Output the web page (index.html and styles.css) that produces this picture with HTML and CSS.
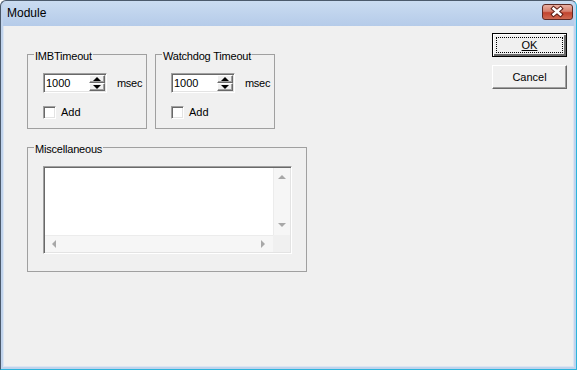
FILE: index.html
```html
<!DOCTYPE html>
<html lang="en">
<head>
  <meta charset="UTF-8" />
  <meta name="viewport" content="width=device-width, initial-scale=1.0" />
  <title>Module</title>
  <link rel="stylesheet" href="styles.css">
</head>
<body>
  <div class="window">
    <div class="titlebar">
      <span class="title">Module</span>
      <button class="close" type="button" aria-label="Close">
        <svg width="29" height="14" viewBox="0 0 29 14">
          <path d="M10.5 3.5 L17.5 9.5 M17.5 3.5 L10.5 9.5" stroke="#5a1c14" stroke-width="4.4" stroke-linecap="square" fill="none" />
          <path d="M10.5 3.5 L17.5 9.5 M17.5 3.5 L10.5 9.5" stroke="#ffffff" stroke-width="2.4" stroke-linecap="square" fill="none" />
        </svg>
      </button>
    </div>

    <div class="client">
      <div class="left">
        <div class="groups">
          <div class="group group-small">
            <div class="group-title">IMBTimeout</div>
            <div class="group-body">
              <div class="spin-row">
                <div class="spin">
                  <span class="spin-value">1000</span>
                  <div class="spin-btns">
                    <span class="spin-btn"><span class="arrow-up"></span></span>
                    <span class="spin-btn"><span class="arrow-down"></span></span>
                  </div>
                </div>
                <span class="unit">msec</span>
              </div>
              <label class="check"><span class="box"></span>Add</label>
            </div>
          </div>

          <div class="group group-small">
            <div class="group-title">Watchdog Timeout</div>
            <div class="group-body">
              <div class="spin-row">
                <div class="spin">
                  <span class="spin-value">1000</span>
                  <div class="spin-btns">
                    <span class="spin-btn"><span class="arrow-up"></span></span>
                    <span class="spin-btn"><span class="arrow-down"></span></span>
                  </div>
                </div>
                <span class="unit">msec</span>
              </div>
              <label class="check"><span class="box"></span>Add</label>
            </div>
          </div>
        </div>

        <div class="group group-misc">
          <div class="group-title">Miscellaneous</div>
          <div class="group-body">
            <div class="listbox">
              <div class="list-top">
                <div class="list-area"></div>
                <div class="vscroll">
                  <span class="sarrow sa-up"></span>
                  <span class="sarrow sa-down"></span>
                </div>
              </div>
              <div class="list-bottom">
                <div class="hscroll">
                  <span class="sarrow sa-left"></span>
                  <span class="sarrow sa-right"></span>
                </div>
                <div class="corner"></div>
              </div>
            </div>
          </div>
        </div>
      </div>

      <div class="buttons">
        <button class="btn btn-default" type="button"><span class="focus"><u>OK</u></span></button>
        <button class="btn" type="button">Cancel</button>
      </div>
    </div>
  </div>
</body>
</html>
```

FILE: styles.css
```css
body {
  margin: 0;
  font-family: 'Liberation Sans', Arial, sans-serif;
  font-size: 11px;
  color: #000;
  background: #fff;
}
.window {
  width: 577px;
  height: 370px;
  box-sizing: border-box;
  border: 1px solid #4b5a6c;
  border-right-color: #2bb4dc;
  border-bottom-color: #2bb4dc;
  border-radius: 6px 6px 0 0;
  background: #c0d3ec;
  padding: 0 2px 2px;
  display: flex;
  flex-direction: column;
}
.titlebar {
  height: 25px;
  flex: none;
  display: flex;
  align-items: flex-start;
  background: linear-gradient(#cadcf1, #b5cbe9);
  border-radius: 5px 5px 0 0;
}
.title {
  font-size: 12px;
  line-height: 25px;
  padding-left: 4px;
}
.close {
  margin: 3px 1px 0 auto;
  width: 31px;
  height: 16px;
  padding: 0;
  border: 1px solid #5e2a24;
  border-radius: 3px;
  background: linear-gradient(#eab0a2, #d6806e 45%, #c2442e 55%, #cf6a52);
  display: flex;
  align-items: center;
  justify-content: center;
}
.close svg {
  display: block;
}
.client {
  flex: 1;
  display: flex;
  background: #f0f0f0;
  border: 1px solid #dbe5f2;
  border-top: none;
}
.left {
  padding: 28px 0 0 23px;
  display: flex;
  flex-direction: column;
}
.groups {
  display: flex;
  gap: 8px;
}
.group {
  box-sizing: border-box;
  border: 1px solid #a0a0a0;
}
.group-small {
  width: 120px;
  height: 75px;
}
.group-misc {
  width: 280px;
  height: 125px;
  margin-top: 18px;
}
.group-title {
  width: fit-content;
  margin: -5px 0 0 6px;
  padding: 0 1px;
  line-height: 13px;
  letter-spacing: -0.2px;
  background: #f0f0f0;
}
.group-body {
  padding: 10px 0 0 15px;
}
.spin-row {
  display: flex;
  align-items: center;
}
.spin {
  width: 64px;
  height: 20px;
  box-sizing: border-box;
  display: flex;
  align-items: center;
  background: #fff;
  border: 1px solid;
  border-color: #a0a0a0 #fff #fff #a0a0a0;
  box-shadow: inset 1px 1px 0 #696969, inset -1px -1px 0 #e3e3e3;
}
.spin-value {
  flex: 1;
  padding-left: 2px;
  line-height: 13px;
}
.spin-btns {
  width: 16px;
  height: 16px;
  margin-right: 1px;
  display: flex;
  flex-direction: column;
}
.spin-btn {
  flex: 1;
  box-sizing: border-box;
  background: #f0f0f0;
  border: 1px solid;
  border-color: #fff #696969 #696969 #fff;
  box-shadow: inset -1px -1px 0 #a0a0a0;
  display: flex;
  align-items: center;
  justify-content: center;
}
.arrow-up, .arrow-down {
  width: 0;
  height: 0;
  margin-right: 1px;
  border-left: 4px solid transparent;
  border-right: 4px solid transparent;
}
.arrow-up {
  border-bottom: 4px solid #000;
}
.arrow-down {
  border-top: 4px solid #000;
}
.unit {
  margin-left: 10px;
  letter-spacing: -0.3px;
}
.check {
  display: flex;
  align-items: center;
  height: 13px;
  margin-top: 13px;
  line-height: 13px;
}
.box {
  width: 13px;
  height: 13px;
  box-sizing: border-box;
  margin-right: 5px;
  background: #fff;
  border: 1px solid;
  border-color: #a0a0a0 #fff #fff #a0a0a0;
  box-shadow: inset 1px 1px 0 #696969, inset -1px -1px 0 #e3e3e3;
}
.listbox {
  width: 249px;
  height: 88px;
  box-sizing: border-box;
  border: 1px solid;
  border-color: #a0a0a0 #fff #fff #a0a0a0;
  padding: 1px;
  box-shadow: inset 1px 1px 0 #696969, inset -1px -1px 0 #e3e3e3;
  background: #fff;
  display: flex;
  flex-direction: column;
}
.list-top {
  flex: 1;
  display: flex;
}
.list-area {
  flex: 1;
  background: #fff;
}
.vscroll {
  width: 17px;
  box-sizing: border-box;
  background: #f6f6f6;
  border-left: 1px solid #ececec;
  display: flex;
  flex-direction: column;
  align-items: center;
  justify-content: space-between;
  padding: 7px 0 8px;
}
.list-bottom {
  height: 17px;
  display: flex;
}
.hscroll {
  flex: 1;
  box-sizing: border-box;
  background: #f6f6f6;
  border-top: 1px solid #ececec;
  display: flex;
  align-items: center;
  justify-content: space-between;
  padding: 0 8px 0 7px;
}
.corner {
  width: 17px;
  background: #f0f0f0;
}
.sarrow {
  width: 0;
  height: 0;
}
.sa-up {
  border-left: 4px solid transparent;
  border-right: 4px solid transparent;
  border-bottom: 4px solid #a8a8a8;
}
.sa-down {
  border-left: 4px solid transparent;
  border-right: 4px solid transparent;
  border-top: 4px solid #a8a8a8;
}
.sa-left {
  border-top: 4px solid transparent;
  border-bottom: 4px solid transparent;
  border-right: 4px solid #a8a8a8;
}
.sa-right {
  border-top: 4px solid transparent;
  border-bottom: 4px solid transparent;
  border-left: 4px solid #a8a8a8;
}
.buttons {
  margin-left: auto;
  padding: 7px 6px 0 0;
  display: flex;
  flex-direction: column;
  gap: 8px;
}
.btn {
  width: 75px;
  height: 24px;
  box-sizing: border-box;
  padding: 0;
  font-family: inherit;
  font-size: 11px;
  color: #000;
  background: #f0f0f0;
  border: 1px solid;
  border-color: #fff #696969 #696969 #fff;
  box-shadow: inset -1px -1px 0 #a0a0a0;
}
.btn-default {
  border: 1px solid #000;
  box-shadow: inset 1px 1px 0 #fff, inset -2px -2px 0 #696969;
  padding: 3px;
}
.focus {
  display: flex;
  align-items: center;
  justify-content: center;
  height: 100%;
  box-sizing: border-box;
  border: 1px dotted #000;
}
```
